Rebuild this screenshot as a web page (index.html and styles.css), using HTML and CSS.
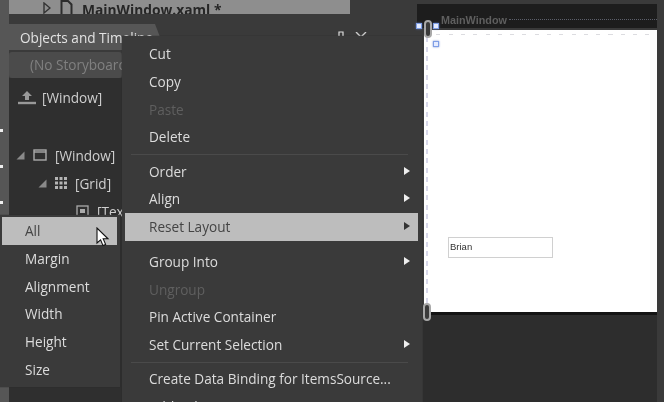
FILE: index.html
```html
<!DOCTYPE html>
<html lang="en">
<head>
    <meta charset="UTF-8">
    <title>Objects and Timeline - Reset Layout</title>
    <link rel="stylesheet" href="styles.css">
</head>
<body>
<div class="app">
    <div class="tools">
        <span class="tick"></span>
        <span class="tick"></span>
        <span class="tick"></span>
    </div>

    <div class="panel">
        <div class="file-bar">
            <svg class="file-arrow" width="8" height="12" viewBox="0 0 8 12"><path d="M1 1 L7 6 L1 11 Z" fill="none" stroke="#333" stroke-width="1.4"/></svg>
            <svg class="file-icon" width="13" height="17" viewBox="0 0 13 17"><path d="M1.5 1 H8 L11.5 4.5 V16 H1.5 Z" fill="none" stroke="#2c2c2c" stroke-width="2"/></svg>
            <span class="file-name">MainWindow.xaml *</span>
        </div>
        <div class="tab-row">
            <div class="tab">Objects and Timeline</div>
            <div class="tab-btns">
                <svg width="8" height="12" viewBox="0 0 8 12"><path d="M2 1 H6 V8 H2 Z" fill="none" stroke="#ddd" stroke-width="1.2"/></svg>
                <svg width="12" height="10" viewBox="0 0 12 10"><path d="M1 0 L6 5 L11 0" fill="none" stroke="#ccc" stroke-width="1.4"/></svg>
            </div>
        </div>
        <div class="storyboard">(No Storyboard open)</div>
        <div class="tree">
            <div class="scope">
                <svg width="18" height="15" viewBox="0 0 18 15"><path d="M9 1 L14 6 H11 V10 H7 V6 H4 Z" fill="#999"/><path d="M0 13 H18" stroke="#999" stroke-width="2.4"/></svg>
                <span>[Window]</span>
            </div>
            <div class="node node-window">
                <svg class="twist" width="9" height="9" viewBox="0 0 9 9"><path d="M8.5 0.5 V8.5 H0.5 Z" fill="#8a8a8a"/></svg>
                <svg width="14" height="12" viewBox="0 0 14 12"><rect x="1" y="1" width="12" height="10" fill="none" stroke="#aaa" stroke-width="1.4"/><path d="M1 3 H13" stroke="#aaa" stroke-width="1.4"/></svg>
                <span>[Window]</span>
            </div>
            <div class="node node-grid">
                <svg class="twist" width="9" height="9" viewBox="0 0 9 9"><path d="M8.5 0.5 V8.5 H0.5 Z" fill="#8a8a8a"/></svg>
                <svg width="12" height="12" viewBox="0 0 12 12"><path d="M0 0h3v3H0zM4.5 0h3v3h-3zM9 0h3v3H9zM0 4.5h3v3H0zM4.5 4.5h3v3h-3zM9 4.5h3v3H9zM0 9h3v3H0zM4.5 9h3v3h-3zM9 9h3v3H9z" fill="#b5b5b5"/></svg>
                <span>[Grid]</span>
            </div>
            <div class="node node-text">
                <svg width="13" height="12" viewBox="0 0 13 12"><rect x="1" y="1" width="11" height="10" fill="none" stroke="#aaa" stroke-width="1.3"/><rect x="4" y="4" width="5" height="4" fill="#aaa"/></svg>
                <span>[TextBox]</span>
            </div>
        </div>
    </div>

    <div class="stage">
        <div class="window-bar">
            <span class="window-title">MainWindow</span>
            <span class="title-dots"></span>
        </div>
        <div class="artboard">
            <div class="textbox">Brian</div>
        </div>
        <div class="below"></div>
    </div>
</div>

<ul class="menu main-menu">
    <li>Cut</li>
    <li>Copy</li>
    <li class="off">Paste</li>
    <li>Delete</li>
    <li class="sep sep-a"></li>
    <li class="more">Order</li>
    <li class="more">Align</li>
    <li class="more active">Reset Layout</li>
    <li class="sep sep-b"></li>
    <li class="more">Group Into</li>
    <li class="off">Ungroup</li>
    <li>Pin Active Container</li>
    <li class="more">Set Current Selection</li>
    <li class="sep sep-c"></li>
    <li>Create Data Binding for ItemsSource...</li>
    <li>Add Behavior</li>
</ul>

<ul class="menu sub-menu">
    <li class="active">All</li>
    <li>Margin</li>
    <li>Alignment</li>
    <li>Width</li>
    <li>Height</li>
    <li>Size</li>
</ul>

<span class="handle handle-a"></span>
<span class="handle handle-b"></span>
<span class="handle handle-c"></span>
<span class="link-pill link-top"></span>
<span class="link-pill link-bottom"></span>

<svg class="cursor" width="14" height="21" viewBox="0 0 14 21"><path d="M1 1 V16 L4.6 12.8 L7 18.6 L9.6 17.4 L7.2 11.8 H12 Z" fill="#fff" stroke="#111" stroke-width="1.1"/></svg>
</body>
</html>
```

FILE: styles.css
```css
html, body {
    margin: 0;
    padding: 0;
    height: 402px;
    overflow: hidden;
}
body {
    position: relative;
    width: 664px;
    background-color: #3a3a3a;
    color: #ddd;
    font-family: "Open Sans", "Noto Sans", sans-serif;
    font-size: 13.6px;
    filter: blur(0.45px);
}
.app {
    display: flex;
    height: 402px;
}

/* left tool strip */
.tools {
    width: 9px;
    background-color: #565656;
    display: flex;
    flex-direction: column;
    gap: 33px;
    padding-top: 129px;
    box-sizing: border-box;
}
.tick {
    width: 3px;
    height: 3px;
    background-color: #eee;
}

/* objects panel */
.panel {
    width: 408px;
    background-color: #3a3a3a;
    display: flex;
    flex-direction: column;
}
.file-bar {
    height: 14px;
    width: 341px;
    background-color: #8e8e8e;
    display: flex;
    align-items: flex-end;
    overflow: hidden;
    box-sizing: border-box;
    padding-left: 34px;
    gap: 9px;
    color: #262626;
    font-weight: 700;
    font-size: 13.8px;
}
.file-icon {
    margin-bottom: -3px;
}
.file-name {
    line-height: 12px;
    margin-bottom: -2px;
    white-space: nowrap;
}
.tab-row {
    height: 26px;
    margin-top: 10px;
    display: flex;
    align-items: center;
    justify-content: space-between;
    padding-right: 50px;
}
.tab {
    width: 156px;
    height: 26px;
    line-height: 28px;
    box-sizing: border-box;
    padding-left: 11px;
    color: #e2e2e2;
    background-color: #565656;
    clip-path: polygon(0 0, 146px 0, 100% 100%, 0 100%);
    white-space: nowrap;
}
.tab-btns {
    display: flex;
    gap: 10px;
    align-items: center;
}
.storyboard {
    width: 113px;
    height: 26px;
    line-height: 26px;
    margin-top: 2px;
    padding-left: 21px;
    box-sizing: border-box;
    white-space: nowrap;
    border-radius: 3px;
    background-color: #4b4b4b;
    color: #808080;
}
.tree {
    flex: 1;
    width: 113px;
    background-color: #2f2f2f;
    color: #cfcfcf;
    box-sizing: border-box;
    padding-left: 9px;
}
.tree svg {
    flex-shrink: 0;
}
.scope {
    display: flex;
    align-items: center;
    gap: 6px;
    height: 26px;
    margin-top: 6px;
}
.node {
    display: flex;
    align-items: center;
    height: 28px;
    gap: 8px;
    white-space: nowrap;
}
.node-window {
    margin-top: 31px;
    margin-left: -2px;
}
.node-grid {
    padding-left: 20px;
}
.node-text {
    padding-left: 58px;
}

/* designer surface */
.stage {
    flex: 1;
    display: flex;
    flex-direction: column;
    background-color: #3a3a3a;
    padding: 4px 7px 0 0;
}
.window-bar {
    height: 24px;
    flex-shrink: 0;
    background-color: #1d1d1d;
    display: flex;
    align-items: flex-end;
    padding-left: 24px;
    gap: 2px;
    box-sizing: border-box;
}
.window-title {
    font-family: "Liberation Sans", sans-serif;
    font-size: 10.8px;
    font-weight: 700;
    color: #5f5f5f;
    line-height: 16px;
}
.title-dots {
    flex: 1;
    border-top: 1px dotted #5c5f6a;
    margin-bottom: 8px;
}
.artboard {
    margin: 2px 0 0 7px;
    height: 282px;
    flex-shrink: 0;
    background-color: #fff;
    box-shadow: 0 3px 0 #141414;
    box-sizing: border-box;
    position: relative;
    background-image:
        repeating-linear-gradient(90deg, #dcdce0 0 4px, transparent 4px 12.3px),
        repeating-linear-gradient(0deg, #d8d8ea 0 5px, transparent 5px 9.3px);
    background-size: 100% 1px, 2px 100%;
    background-position: 0 4px, 2px 0;
    background-repeat: no-repeat;
}
.below {
    flex: 1;
    margin-left: 6px;
    background-color: #2d2d2d;
}
.textbox {
    position: absolute;
    left: 24px;
    top: 207px;
    width: 105px;
    height: 21px;
    box-sizing: border-box;
    border: 1px solid #d0d0d0;
    background-color: #fff;
    color: #333;
    font-family: "Liberation Sans", sans-serif;
    font-size: 9.5px;
    line-height: 17px;
    padding-left: 1px;
}

/* selection adorners */
.handle {
    position: absolute;
    width: 4px;
    height: 4px;
    border: 1px solid #7f9ee6;
    background-color: #e4ebff;
    box-shadow: 0 0 2px #5f7fc8;
}
.handle-a { left: 416px; top: 23px; }
.handle-b { left: 433px; top: 23px; }
.handle-c { left: 433px; top: 41px; }
.link-pill {
    position: absolute;
    box-sizing: border-box;
    width: 8px;
    height: 18px;
    border: 2px solid #a8a8a8;
    border-radius: 4px;
    background-color: #3a3a3a;
}
.link-top { left: 424px; top: 20px; }
.link-bottom { left: 423px; top: 303px; }

/* context menus */
.menu {
    position: absolute;
    margin: 0;
    padding: 4px 4px 0 3px;
    list-style: none;
    background-color: #3a3a3a;
    box-sizing: border-box;
    color: #dcdcdc;
    overflow: hidden;
    box-shadow: 0 0 1px #242424;
}
.menu li {
    height: 27.8px;
    line-height: 27.8px;
    box-sizing: border-box;
    white-space: nowrap;
    position: relative;
}
.main-menu {
    left: 122px;
    top: 36px;
    width: 300px;
    height: 366px;
}
.main-menu li {
    padding-left: 24px;
}
.sub-menu {
    left: 0;
    top: 215px;
    width: 120px;
    height: 172px;
    padding: 2px 3px 0 2px;
}
.sub-menu li {
    padding-left: 23px;
}
.menu li.off {
    color: #5f5f5f;
}
.menu li.active {
    background-color: #bdbdbd;
    color: #444;
}
.menu li.sep {
    height: 7px;
    margin: 0 10px 0 6px;
    background: linear-gradient(#4a4a4a, #4a4a4a) center / 100% 1px no-repeat;
}
.menu li.sep-a {
    height: 6.5px;
}
.menu li.sep-b {
    height: 6.8px;
    background: none;
}
.menu li.sep-c {
    height: 6.4px;
}
.menu li.more::after {
    content: "";
    position: absolute;
    right: 8px;
    top: 9px;
    border-left: 6px solid #eee;
    border-top: 4.5px solid transparent;
    border-bottom: 4.5px solid transparent;
}
.menu li.more.active::after {
    border-left-color: #333;
}
.cursor {
    position: absolute;
    left: 96px;
    top: 227px;
}
```
